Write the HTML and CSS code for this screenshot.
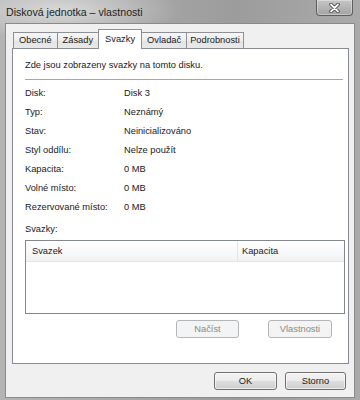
FILE: index.html
```html
<!DOCTYPE html>
<html lang="cs">
<head>
<meta charset="utf-8">
<title>Disková jednotka – vlastnosti</title>
<link rel="stylesheet" href="styles.css">
</head>
<body>
<div class="window">
  <div class="titlebar">
    <span class="title">Disková jednotka – vlastnosti</span>
    <button class="close" aria-label="Zavřít">
      <svg width="11" height="10" viewBox="0 0 11 10">
        <path d="M2 1.5 L9 8.5 M9 1.5 L2 8.5" stroke="#3c3c3c" stroke-width="3.4" stroke-linecap="round"/>
        <path d="M2 1.5 L9 8.5 M9 1.5 L2 8.5" stroke="#ffffff" stroke-width="1.8" stroke-linecap="round"/>
      </svg>
    </button>
  </div>
  <div class="client">
    <div class="tabs">
      <div class="tab">Obecné</div>
      <div class="tab">Zásady</div>
      <div class="tab active">Svazky</div>
      <div class="tab">Ovladač</div>
      <div class="tab tab-narrow">Podrobnosti</div>
    </div>
    <div class="panel">
      <p class="intro">Zde jsou zobrazeny svazky na tomto disku.</p>
      <div class="sep"></div>
      <dl class="props">
        <dt>Disk:</dt><dd>Disk 3</dd>
        <dt>Typ:</dt><dd>Neznámý</dd>
        <dt>Stav:</dt><dd>Neinicializováno</dd>
        <dt>Styl oddílu:</dt><dd>Nelze použít</dd>
        <dt>Kapacita:</dt><dd>0 MB</dd>
        <dt>Volné místo:</dt><dd>0 MB</dd>
        <dt>Rezervované místo:</dt><dd>0 MB</dd>
      </dl>
      <div class="vol-label">Svazky:</div>
      <div class="list">
        <div class="list-head">
          <div class="col col-name">Svazek</div>
          <div class="col col-cap">Kapacita</div>
        </div>
      </div>
      <div class="panel-buttons">
        <button class="btn btn-load" disabled>Načíst</button>
        <button class="btn btn-props" disabled>Vlastnosti</button>
      </div>
    </div>
    <div class="dialog-buttons">
      <button class="btn btn-ok">OK</button>
      <button class="btn btn-cancel">Storno</button>
    </div>
  </div>
</div>
</body>
</html>
```

FILE: styles.css
```css
* { box-sizing: border-box; }

html, body {
  margin: 0;
  padding: 0;
}

body {
  width: 360px;
  height: 400px;
  overflow: hidden;
  font-family: "Liberation Sans", Arial, sans-serif;
  font-size: 9.3px;
  color: #1a1a1a;
  background: #a6a6a6;
}

.window {
  width: 360px;
  height: 400px;
  display: flex;
  flex-direction: column;
  background:
    radial-gradient(ellipse 120px 30px at 60px 10px, rgba(230,230,230,0.75), rgba(230,230,230,0) 100%),
    linear-gradient(90deg, #b4b4b4 0%, #a8a8a8 35%, #9c9c9c 65%, #aaaaaa 100%);
}

.titlebar {
  height: 24px;
  flex: none;
  display: flex;
  align-items: flex-start;
  padding-left: 6px;
}

.title {
  font-size: 10.6px;
  line-height: 24px;
  color: #1e1e1e;
}

.close {
  margin-left: auto;
  margin-right: 7px;
  width: 37px;
  height: 16px;
  padding: 0;
  border: 1px solid #5e5e5e;
  border-top: none;
  border-radius: 0 0 4px 4px;
  background: linear-gradient(#c6c6c6, #b0b0b0 60%, #a4a4a4);
  box-shadow: inset 0 0 0 1px rgba(255,255,255,0.35);
  display: flex;
  align-items: center;
  justify-content: center;
}

.close svg { display: block; }

.client {
  flex: 1;
  margin: 0 6px 3px 6px;
  padding: 5px 5px 7px 6px;
  background: #f0f0f0;
  box-shadow: 0 0 0 1px #8a8a8a;
  display: flex;
  flex-direction: column;
}

.tabs {
  flex: none;
  display: flex;
  align-items: flex-end;
  height: 20px;
  margin-bottom: -1px;
  padding-left: 1px;
  position: relative;
  z-index: 1;
}

.tab {
  height: 16px;
  margin-bottom: 1px;
  margin-right: -1px;
  padding: 0 5px;
  line-height: 15px;
  border: 1px solid #8e9095;
  border-bottom: none;
  background: linear-gradient(#f6f6f6, #ededed 50%, #e3e3e3 51%, #e9e9e9);
  white-space: nowrap;
}

.tab.active {
  height: 20px;
  margin-bottom: 0;
  padding: 0 6px;
  line-height: 19px;
  background: #ffffff;
  position: relative;
  z-index: 2;
}

.tab.tab-narrow {
  padding: 0 3px;
}

.panel {
  flex: 1;
  border: 1px solid #898c95;
  background: #ffffff;
  padding: 7px 3px 0 12px;
  display: flex;
  flex-direction: column;
}

.intro {
  margin: 0;
  line-height: 19px;
}

.sep {
  height: 1px;
  margin: 4px 2px 4px 0;
  background: #a8a8a8;
}

.props {
  margin: 0;
  display: grid;
  grid-template-columns: 99px 1fr;
  grid-auto-rows: 19px;
  line-height: 19px;
}

.props dt,
.props dd {
  margin: 0;
  white-space: nowrap;
}

.vol-label {
  margin-top: 3px;
  line-height: 19px;
}

.list {
  margin-top: 1px;
  height: 74px;
  border: 1px solid #828790;
  background: #ffffff;
}

.list-head {
  display: flex;
  height: 21px;
  border-bottom: 1px solid #e5e5e5;
  background: linear-gradient(#ffffff, #f7f8f9 60%, #f1f2f4);
}

.col {
  line-height: 20px;
  white-space: nowrap;
}

.col-name {
  width: 212px;
  padding-left: 6px;
  border-right: 1px solid #e3e4e6;
}

.col-cap {
  flex: 1;
  padding-left: 4px;
}

.panel-buttons {
  display: flex;
  justify-content: flex-end;
  gap: 29px;
  margin-top: 6px;
  padding-right: 13px;
}

.dialog-buttons {
  flex: none;
  display: flex;
  justify-content: flex-end;
  gap: 8px;
  margin-top: 8px;
  padding-right: 3px;
}

.btn {
  height: 18px;
  padding: 0;
  font-family: inherit;
  font-size: 9.3px;
  color: #1a1a1a;
  border: 1px solid #707070;
  border-radius: 3px;
  background: linear-gradient(#f3f3f3, #ebebeb 50%, #dddddd 51%, #cfcfcf);
  box-shadow: inset 0 0 0 1px rgba(255,255,255,0.6);
}

.btn:disabled {
  color: #8a8a8a;
  border-color: #b3b6b9;
  background: #f4f4f4;
  box-shadow: none;
}

.btn-load { width: 63px; }
.btn-props { width: 64px; }
.btn-ok { width: 63px; }
.btn-cancel { width: 61px; }
```
